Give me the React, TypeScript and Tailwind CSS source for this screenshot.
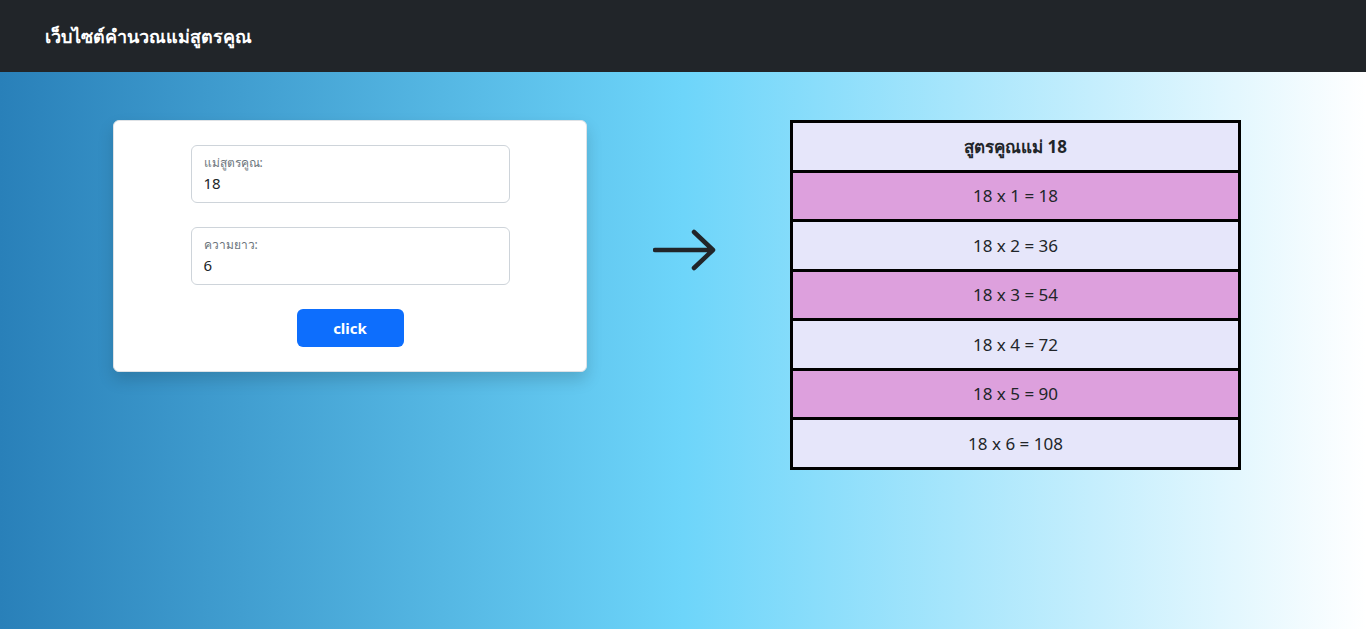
const rows = [1, 2, 3, 4, 5, 6]

export default function App() {
  return (
    <div className="min-h-[629px] flex flex-col font-['Noto_Sans',sans-serif]">
      <nav className="h-[72px] bg-[#212529] flex items-center px-[45px]">
        <span className="text-white font-bold text-[18px]">เว็บไซต์คำนวณแม่สูตรคูณ</span>
      </nav>
      <main className="flex-1 h-[557px] bg-[linear-gradient(to_right,#2980b9,#6dd5fa_50%,#ffffff)] flex items-start pl-[113px] pt-[48px]">
        <div className="w-[474px] h-[252px] bg-white rounded-md border border-[#dee2e6] shadow-[0_8px_16px_rgba(0,0,0,0.15)] flex flex-col items-center pt-[24px]">
          <div className="w-[319px] h-[58px] border border-[#ced4da] rounded-md px-3 pt-[8px]">
            <div className="text-[12px] text-[#6c757d] leading-[18px]">แม่สูตรคูณ:</div>
            <div className="text-[15px] text-[#212529] leading-[22px]">18</div>
          </div>
          <div className="w-[319px] h-[58px] border border-[#ced4da] rounded-md px-3 pt-[8px] mt-[24px]">
            <div className="text-[12px] text-[#6c757d] leading-[18px]">ความยาว:</div>
            <div className="text-[15px] text-[#212529] leading-[22px]">6</div>
          </div>
          <button className="mt-[24px] w-[107px] h-[38px] bg-[#0d6efd] text-white font-bold text-[15px] rounded-md">
            click
          </button>
        </div>
        <div className="w-[203px] pt-[108px] pl-[66px]">
          <svg width="66" height="44" viewBox="0 0 66 44" fill="none">
            <path
              d="M2 22H60M41 4L60 22L41 40"
              stroke="#212529"
              strokeWidth="4.5"
              strokeLinecap="round"
              strokeLinejoin="round"
            />
          </svg>
        </div>
        <div className="w-[451px] border-[3px] border-black">
          <div className="h-[46.5px] bg-[#e6e6fa] flex items-center justify-center font-bold text-[17px] text-[#212529]">
            สูตรคูณแม่ 18
          </div>
          {rows.map((n) => (
            <div
              key={n}
              className={
                'h-[49.5px] border-t-[3px] border-black flex items-center justify-center text-[17px] text-[#212529] ' +
                (n % 2 === 1 ? 'bg-[#dda0dd]' : 'bg-[#e6e6fa]')
              }
            >
              18 x {n} = {18 * n}
            </div>
          ))}
        </div>
      </main>
    </div>
  )
}
